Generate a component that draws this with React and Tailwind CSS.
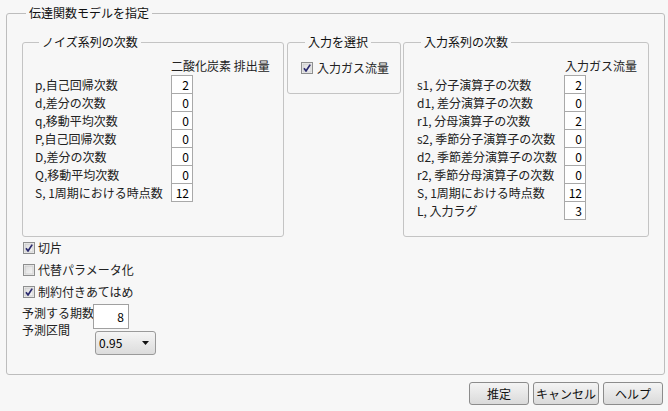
import React from "react";

const FONT = { fontFamily: '"Noto Sans CJK JP", "Noto Sans", sans-serif' };

function Check({ checked }) {
  return (
    <svg width="12" height="12" viewBox="0 0 12 12" className="shrink-0">
      <defs>
        <linearGradient id={checked ? "cg1" : "cg2"} x1="0" y1="0" x2="1" y2="1">
          <stop offset="0" stopColor="#dcdcdc" />
          <stop offset="1" stopColor="#f6f6f6" />
        </linearGradient>
      </defs>
      <rect x="0.5" y="0.5" width="11" height="11" fill="#f3f3f3" stroke="#8e8f8f" />
      <rect x="2" y="2" width="8" height="8" fill={`url(#${checked ? "cg1" : "cg2"})`} stroke="#c9c9c9" strokeWidth="0.8" />
      {checked && (
        <path d="M3 6.2 L5 9 L9.2 2.6" fill="none" stroke="#2a2a6e" strokeWidth="1.7" strokeLinejoin="round" />
      )}
    </svg>
  );
}

function NumBox({ v, first }) {
  return (
    <div
      className={`w-[22px] h-[19px] ${first ? "" : "-mt-px"} bg-white border border-[#a9a9a9] flex items-center justify-end pr-[3px] text-[12px] leading-[14px] text-black`}
    >
      {v}
    </div>
  );
}

function Rows({ rows, labelW }) {
  return (
    <div className="flex flex-col">
      {rows.map(([l, v], i) => (
        <div key={i} className={`flex ${i === 0 ? "" : "-mt-px"} h-[19px] items-center`}>
          <div className="text-[12px] leading-[14px] text-[#222] whitespace-nowrap" style={{ width: labelW }}>
            {l}
          </div>
          <div className="w-[22px] h-[19px] bg-white border border-[#a9a9a9] flex items-center justify-end pr-[3px] text-[12px] leading-[14px] text-black">
            {v}
          </div>
        </div>
      ))}
    </div>
  );
}

function Legend({ children }) {
  return (
    <legend className="ml-[4px] px-[3px] text-[12px] leading-[14px] text-[#111]">{children}</legend>
  );
}

function Button({ children, w }) {
  return (
    <div
      className={`${w} h-[23px] rounded-[3px] border border-[#8c8c8c] bg-gradient-to-b from-[#f4f4f4] to-[#dadada] flex items-center justify-center text-[12px] leading-[14px] text-[#111]`}
    >
      {children}
    </div>
  );
}

export default function App() {
  const noise = [
    ["p,自己回帰次数", "2"],
    ["d,差分の次数", "0"],
    ["q,移動平均次数", "0"],
    ["P,自己回帰次数", "0"],
    ["D,差分の次数", "0"],
    ["Q,移動平均次数", "0"],
    ["S, 1周期における時点数", "12"],
  ];
  const input = [
    ["s1, 分子演算子の次数", "2"],
    ["d1, 差分演算子の次数", "0"],
    ["r1, 分母演算子の次数", "2"],
    ["s2, 季節分子演算子の次数", "0"],
    ["d2, 季節差分演算子の次数", "0"],
    ["r2, 季節分母演算子の次数", "0"],
    ["S, 1周期における時点数", "12"],
    ["L, 入力ラグ", "3"],
  ];
  return (
    <div className="w-[668px] h-[411px] bg-[#f7f7f7] overflow-hidden text-[#222]" style={FONT}>
      <fieldset className="ml-[6px] mt-[6px] w-[657px] h-[369px] border border-[#bdbdbd] rounded-[3px] px-[15px]">
        <Legend>伝達関数モデルを指定</Legend>
        <div className="flex mt-[15px]">
          <fieldset className="w-[262px] h-[202px] border border-[#c4c4c4] rounded-[3px] pl-[12px]">
            <Legend>ノイズ系列の次数</Legend>
            <div className="mt-[10px] pl-[136px] text-[12px] leading-[14px] whitespace-nowrap">二酸化炭素 排出量</div>
            <div className="mt-[2px]">
              <Rows rows={noise} labelW={136} />
            </div>
          </fieldset>
          <fieldset className="ml-[3px] w-[114px] h-[59px] border border-[#c4c4c4] rounded-[3px] pl-[13px]">
            <Legend>入力を選択</Legend>
            <div className="mt-[12px] flex items-center gap-[4px] h-[14px]">
              <Check checked />
              <span className="text-[12px] leading-[14px] whitespace-nowrap">入力ガス流量</span>
            </div>
          </fieldset>
          <fieldset className="ml-[2px] w-[246px] h-[202px] border border-[#c4c4c4] rounded-[3px] pl-[13px]">
            <Legend>入力系列の次数</Legend>
            <div className="mt-[10px] pl-[148px] text-[12px] leading-[14px] whitespace-nowrap">入力ガス流量</div>
            <div className="mt-[2px]">
              <Rows rows={input} labelW={147} />
            </div>
          </fieldset>
        </div>
        <div className="flex flex-col ml-[1px]">
          {[
            ["切片", true],
            ["代替パラメータ化", false],
            ["制約付きあてはめ", true],
          ].map(([l, c]) => (
            <div key={l} className="h-[22px] flex items-center gap-[3px]">
              <Check checked={c} />
              <span className="text-[12px] leading-[14px] whitespace-nowrap">{l}</span>
            </div>
          ))}
        </div>
        <div className="flex mt-[1px]">
          <div className="w-[71px] flex flex-col text-[12px] leading-[17px] whitespace-nowrap">
            <div>予測する期数</div>
            <div>予測区間</div>
          </div>
          <div className="flex flex-col">
            <div className="w-[36px] h-[25px] bg-white border border-[#a0a0a0] flex items-center justify-end pr-[4px] text-[12px] leading-[14px] text-black">
              8
            </div>
            <div className="ml-[2px] mt-[2px] w-[61px] h-[24px] rounded-[3px] border border-[#9a9a9a] bg-gradient-to-b from-[#f5f5f5] to-[#dcdcdc] flex items-center justify-between pl-[3px] pr-[6px]">
              <span className="text-[12px] leading-[14px] text-black">0.95</span>
              <svg width="7" height="4" viewBox="0 0 7 4">
                <path d="M0 0 H7 L3.5 4 Z" fill="#111" />
              </svg>
            </div>
          </div>
        </div>
      </fieldset>
      <div className="flex justify-end gap-[4px] pr-[5px] mt-[7px]">
        <Button w="w-[60px]">推定</Button>
        <Button w="w-[66px]">キャンセル</Button>
        <Button w="w-[60px]">ヘルプ</Button>
      </div>
    </div>
  );
}
